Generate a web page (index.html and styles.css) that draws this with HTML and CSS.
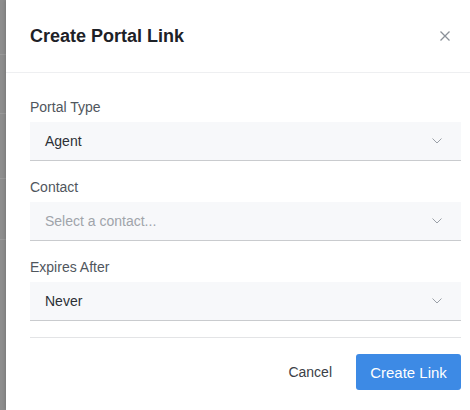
FILE: index.html
```html
<!DOCTYPE html>
<html lang="en">
<head>
    <meta charset="UTF-8">
    <meta name="viewport" content="width=device-width, initial-scale=1.0">
    <title>Create Portal Link</title>
    <link rel="stylesheet" href="styles.css">
</head>
<body>
    <div class="backdrop">
        <div class="backdrop-row r1"></div>
        <div class="backdrop-row r2"></div>
        <div class="backdrop-row r3"></div>
        <div class="backdrop-row r4"></div>
    </div>

    <div class="modal">
        <header class="modal-header">
            <h1>Create Portal Link</h1>
            <button class="close-btn" type="button" aria-label="Close">
                <svg width="10" height="10" viewBox="0 0 10 10">
                    <path d="M0.5 0.5 L9.5 9.5 M9.5 0.5 L0.5 9.5" stroke="#8a9098" stroke-width="1.3" fill="none"/>
                </svg>
            </button>
        </header>

        <form class="modal-body">
            <div class="form-group">
                <label>Portal Type</label>
                <div class="select">
                    <span class="value">Agent</span>
                    <svg class="chevron" width="10" height="6" viewBox="0 0 10 6">
                        <path d="M0.5 0.5 L5 5 L9.5 0.5" stroke="#9aa0a7" stroke-width="1" fill="none"/>
                    </svg>
                </div>
            </div>
            <div class="form-group">
                <label>Contact</label>
                <div class="select">
                    <span class="value placeholder">Select a contact...</span>
                    <svg class="chevron" width="10" height="6" viewBox="0 0 10 6">
                        <path d="M0.5 0.5 L5 5 L9.5 0.5" stroke="#9aa0a7" stroke-width="1" fill="none"/>
                    </svg>
                </div>
            </div>
            <div class="form-group">
                <label>Expires After</label>
                <div class="select">
                    <span class="value">Never</span>
                    <svg class="chevron" width="10" height="6" viewBox="0 0 10 6">
                        <path d="M0.5 0.5 L5 5 L9.5 0.5" stroke="#9aa0a7" stroke-width="1" fill="none"/>
                    </svg>
                </div>
            </div>

            <div class="modal-footer">
                <button type="button" class="btn-cancel">Cancel</button>
                <button type="submit" class="btn-primary">Create Link</button>
            </div>
        </form>
    </div>
</body>
</html>
```

FILE: styles.css
```css
html, body {
    margin: 0;
    height: 100%;
}

body {
    font-family: 'Liberation Sans', Arial, sans-serif;
    background-color: #fff;
    display: flex;
    overflow: hidden;
}

/* Dimmed page behind the modal */
.backdrop {
    width: 6px;
    flex-shrink: 0;
    background-color: #8d8d8d;
    display: flex;
    flex-direction: column;
}

.backdrop-row {
    border-bottom: 1px solid #999;
}

.r1 { height: 54px; }
.r2 { height: 58px; }
.r3 { height: 64px; }
.r4 { height: 60px; }

.modal {
    width: 479px;
    flex-shrink: 0;
    background-color: #fff;
    box-shadow: -1px 0 3px rgba(0, 0, 0, 0.15);
}

.modal-header {
    height: 72px;
    padding: 0 24px;
    display: flex;
    align-items: center;
    justify-content: space-between;
    border-bottom: 1px solid #eeeff1;
}

h1 {
    margin: 0;
    font-size: 18px;
    font-weight: bold;
    color: #1d2127;
}

.close-btn {
    width: 32px;
    height: 32px;
    margin-right: 0;
    padding: 0;
    border: none;
    background: none;
    display: flex;
    align-items: center;
    justify-content: center;
    cursor: pointer;
}

.modal-body {
    padding: 24px 24px 0;
}

.form-group {
    margin-bottom: 16px;
}

label {
    display: block;
    font-size: 14px;
    line-height: 20px;
    color: #50565d;
    margin-bottom: 5px;
}

.select {
    height: 38px;
    padding: 0 19px 0 15px;
    background-color: #f7f8fa;
    border-bottom: 1px solid #c9cbce;
    display: flex;
    align-items: center;
    justify-content: space-between;
    font-size: 14px;
    color: #2c3036;
}

.placeholder {
    color: #a0a4aa;
}

.modal-footer {
    border-top: 1px solid #e3e4e6;
    padding-top: 16px;
    display: flex;
    justify-content: flex-end;
    align-items: center;
    gap: 8px;
}

.btn-cancel {
    font-family: inherit;
    font-size: 14px;
    color: #3b4047;
    background: none;
    border: none;
    height: 36px;
    padding: 0 16px;
    cursor: pointer;
}

.btn-primary {
    font-family: inherit;
    font-size: 15px;
    color: #fff;
    background-color: #3d8ae5;
    border: none;
    border-radius: 3px;
    height: 36px;
    width: 105px;
    cursor: pointer;
}
```
